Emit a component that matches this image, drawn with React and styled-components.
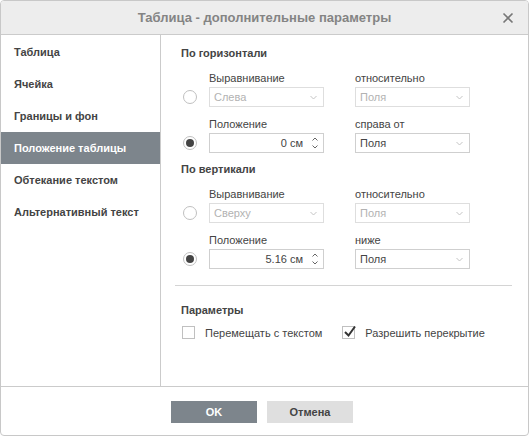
import React from 'react';
import styled, { createGlobalStyle } from 'styled-components';

const GlobalStyle = createGlobalStyle`
  html, body {
    margin: 0;
    padding: 0;
    background: #fff;
  }
  * {
    box-sizing: border-box;
  }
`;

const Dialog = styled.div`
  width: 529px;
  height: 436px;
  border: 1px solid #c8c8c8;
  border-radius: 4px;
  background: #fff;
  display: flex;
  flex-direction: column;
  overflow: hidden;
  font-family: 'Liberation Sans', Arial, sans-serif;
  font-size: 11px;
  color: #444;
`;

const Header = styled.div`
  height: 34px;
  flex: none;
  background: #ededed;
  border-bottom: 1px solid #cbcbcb;
  display: flex;
  align-items: center;
  justify-content: center;
  position: relative;
`;

const Title = styled.div`
  font-size: 13px;
  font-weight: bold;
  color: #848484;
`;

const Close = styled.div`
  position: absolute;
  right: 14px;
  top: 11px;
  width: 12px;
  height: 12px;
  display: flex;
`;

const Body = styled.div`
  flex: 1;
  display: flex;
  border-bottom: 1px solid #cbcbcb;
`;

const Sidebar = styled.div`
  width: 160px;
  flex: none;
  border-right: 1px solid #cbcbcb;
  padding-top: 1px;
`;

const NavItem = styled.div`
  height: 32px;
  line-height: 32px;
  padding-left: 13px;
  font-weight: bold;
  color: ${({ $active }) => ($active ? '#fff' : '#444')};
  background: ${({ $active }) => ($active ? '#7d858c' : 'transparent')};
`;

const Content = styled.div`
  flex: 1;
  padding: 11px 17px 0 20px;
  display: flex;
  flex-direction: column;
`;

const Heading = styled.div`
  font-weight: bold;
  line-height: 14px;
  margin-top: ${({ $mt }) => $mt || 0}px;
`;

const FieldRow = styled.div`
  display: grid;
  grid-template-columns: 28px 146px 115px;
  margin-top: ${({ $mt }) => $mt || 0}px;
  align-items: end;
`;

const Field = styled.div`
  width: 115px;
  display: flex;
  flex-direction: column;
`;

const Label = styled.div`
  line-height: 14px;
  margin-bottom: 2px;
  color: #444;
`;

const RadioCell = styled.div`
  height: 20px;
  display: flex;
  align-items: center;
  padding-left: 2px;
`;

const Radio = styled.div`
  width: 14px;
  height: 14px;
  border-radius: 50%;
  border: 1px solid #c0c0c0;
  display: flex;
  align-items: center;
  justify-content: center;
  background: #fff;
  &::after {
    content: '';
    width: 8px;
    height: 8px;
    border-radius: 50%;
    background: #444;
    display: ${({ $checked }) => ($checked ? 'block' : 'none')};
  }
`;

const Select = styled.div`
  height: 20px;
  border: 1px solid ${({ $disabled }) => ($disabled ? '#dedede' : '#cfcfcf')};
  display: flex;
  align-items: center;
  padding: 0 6px 0 4px;
  color: ${({ $disabled }) => ($disabled ? '#b2b2b2' : '#444')};
  background: #fff;
`;

const SelectText = styled.span`
  flex: 1;
`;

const Spin = styled.div`
  height: 20px;
  border: 1px solid #cfcfcf;
  display: flex;
  align-items: center;
  padding: 0 5px 0 4px;
`;

const SpinValue = styled.span`
  flex: 1;
  text-align: right;
  padding-right: 9px;
`;

const Arrows = styled.div`
  display: flex;
  flex-direction: column;
  gap: 4px;
  width: 6px;
`;

const Separator = styled.div`
  height: 1px;
  background: #d4d4d4;
  margin: 16px 0 0 -6px;
  width: 337px;
`;

const CheckRow = styled.div`
  display: flex;
  align-items: center;
  margin-top: 9px;
  padding-left: 1px;
`;

const CheckItem = styled.div`
  display: flex;
  align-items: center;
  margin-right: ${({ $mr }) => $mr || 0}px;
`;

const Box = styled.div`
  width: 13px;
  height: 13px;
  border: 1px solid #c0c0c0;
  margin-right: 10px;
  position: relative;
  background: #fff;
`;

const Footer = styled.div`
  height: 48px;
  flex: none;
  display: flex;
  justify-content: center;
  align-items: flex-start;
  padding-top: 14px;
  gap: 10px;
  padding-right: 5px;
`;

const Button = styled.div`
  width: 86px;
  height: 22px;
  display: flex;
  align-items: center;
  justify-content: center;
  font-weight: bold;
  background: ${({ $primary }) => ($primary ? '#7d858c' : '#dfdfdf')};
  color: ${({ $primary }) => ($primary ? '#fff' : '#444')};
`;

const Chevron = () => (
  <svg width="7" height="5" viewBox="0 0 7 5">
    <path d="M0.5 1 L3.5 4 L6.5 1" fill="none" stroke="#c4c4c4" strokeWidth="1" />
  </svg>
);

const Caret = ({ up }) => (
  <svg width="6" height="4" viewBox="0 0 6 4">
    <path d={up ? 'M0.5 3.5 L3 1 L5.5 3.5' : 'M0.5 0.5 L3 3 L5.5 0.5'} fill="none" stroke="#666" strokeWidth="1" />
  </svg>
);

const SelectBox = ({ value, disabled }) => (
  <Select $disabled={disabled}>
    <SelectText>{value}</SelectText>
    <Chevron />
  </Select>
);

const SpinBox = ({ value }) => (
  <Spin>
    <SpinValue>{value}</SpinValue>
    <Arrows>
      <Caret up />
      <Caret />
    </Arrows>
  </Spin>
);

const PositionBlock = ({ title, mt, align, posValue, posLabel }) => (
  <>
    <Heading $mt={mt}>{title}</Heading>
    <FieldRow $mt={11}>
      <RadioCell>
        <Radio />
      </RadioCell>
      <Field>
        <Label>Выравнивание</Label>
        <SelectBox value={align} disabled />
      </Field>
      <Field>
        <Label>относительно</Label>
        <SelectBox value="Поля" disabled />
      </Field>
    </FieldRow>
    <FieldRow $mt={10}>
      <RadioCell>
        <Radio $checked />
      </RadioCell>
      <Field>
        <Label>Положение</Label>
        <SpinBox value={posValue} />
      </Field>
      <Field>
        <Label>{posLabel}</Label>
        <SelectBox value="Поля" />
      </Field>
    </FieldRow>
  </>
);

const navItems = [
  'Таблица',
  'Ячейка',
  'Границы и фон',
  'Положение таблицы',
  'Обтекание текстом',
  'Альтернативный текст',
];

export default function App() {
  return (
    <>
      <GlobalStyle />
      <Dialog>
        <Header>
          <Title>Таблица - дополнительные параметры</Title>
          <Close>
            <svg width="12" height="12" viewBox="0 0 12 12">
              <path d="M1.5 1.5 L10.5 10.5 M10.5 1.5 L1.5 10.5" stroke="#777" strokeWidth="1.6" />
            </svg>
          </Close>
        </Header>
        <Body>
          <Sidebar>
            {navItems.map((item) => (
              <NavItem key={item} $active={item === 'Положение таблицы'}>
                {item}
              </NavItem>
            ))}
          </Sidebar>
          <Content>
            <PositionBlock title="По горизонтали" align="Слева" posValue="0 см" posLabel="справа от" />
            <PositionBlock title="По вертикали" mt={9} align="Сверху" posValue="5.16 см" posLabel="ниже" />
            <Separator />
            <Heading $mt={17}>Параметры</Heading>
            <CheckRow>
              <CheckItem $mr={20}>
                <Box />
                Перемещать с текстом
              </CheckItem>
              <CheckItem>
                <Box>
                  <svg width="14" height="13" viewBox="0 0 14 13" style={{ position: 'absolute', left: 0, top: -2 }}>
                    <path d="M2 7 L5.5 10.5 L12 1.5" fill="none" stroke="#333" strokeWidth="2" />
                  </svg>
                </Box>
                Разрешить перекрытие
              </CheckItem>
            </CheckRow>
          </Content>
        </Body>
        <Footer>
          <Button $primary>OK</Button>
          <Button>Отмена</Button>
        </Footer>
      </Dialog>
    </>
  );
}
